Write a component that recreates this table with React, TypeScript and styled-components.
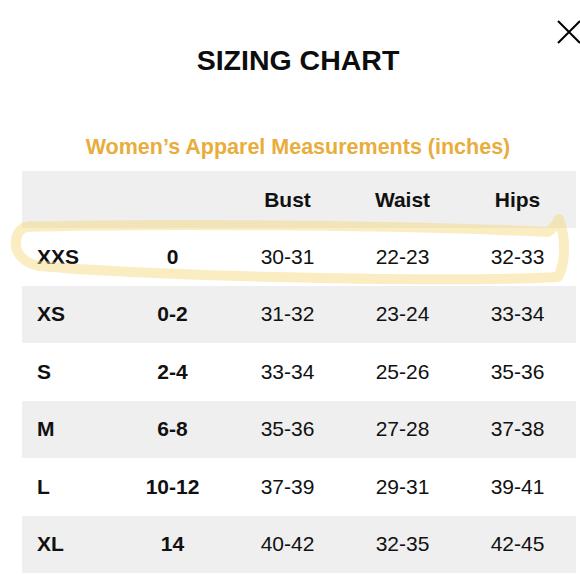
import React from "react";
import styled, { createGlobalStyle } from "styled-components";

const GlobalStyle = createGlobalStyle`
  html, body {
    margin: 0;
    padding: 0;
    background: #ffffff;
  }
  body {
    font-family: "Liberation Sans", Arial, sans-serif;
    color: #111111;
  }
`;

const Page = styled.div`
  position: relative;
  width: 580px;
  height: 580px;
  overflow: hidden;
  background: #ffffff;
`;

const CloseButton = styled.button`
  position: absolute;
  top: 20px;
  left: 557px;
  width: 24px;
  height: 24px;
  padding: 0;
  border: none;
  background: transparent;
  cursor: pointer;
`;

const Heading = styled.div`
  padding-left: 16px;
`;

const Title = styled.h1`
  margin: 43px 0 0;
  height: 34px;
  font-size: 28.5px;
  line-height: 34px;
  font-weight: 700;
  text-align: center;
  color: #0d0d0d;
`;

const Subtitle = styled.h2`
  margin: 57px 0 0;
  height: 26px;
  font-size: 21.5px;
  line-height: 26px;
  font-weight: 700;
  text-align: center;
  color: #e8ad3c;
`;

const Table = styled.div`
  margin: 11px 0 0 22px;
  width: 554px;
`;

const Row = styled.div<{ $shaded?: boolean; $height: number }>`
  display: grid;
  grid-template-columns: 93px repeat(4, 115px);
  align-items: center;
  height: ${(p) => p.$height}px;
  background: ${(p) => (p.$shaded ? "#efefef" : "#ffffff")};
`;

const Cell = styled.div<{ $bold?: boolean; $left?: boolean }>`
  font-size: 21px;
  line-height: 24px;
  font-weight: ${(p) => (p.$bold ? 700 : 400)};
  text-align: ${(p) => (p.$left ? "left" : "center")};
  padding-left: ${(p) => (p.$left ? "15px" : "0")};
  color: #111111;
`;

const Highlight = styled.svg`
  position: absolute;
  top: 0;
  left: 0;
  pointer-events: none;
`;

const rows = [
  ["XXS", "0", "30-31", "22-23", "32-33"],
  ["XS", "0-2", "31-32", "23-24", "33-34"],
  ["S", "2-4", "33-34", "25-26", "35-36"],
  ["M", "6-8", "35-36", "27-28", "37-38"],
  ["L", "10-12", "37-39", "29-31", "39-41"],
  ["XL", "14", "40-42", "32-35", "42-45"],
];

export default function App() {
  return (
    <Page>
      <GlobalStyle />
      <CloseButton aria-label="Close">
        <svg width="24" height="24" viewBox="0 0 24 24">
          <path d="M1 1 L23 23 M23 1 L1 23" stroke="#000" strokeWidth="2" />
        </svg>
      </CloseButton>
      <Heading>
        <Title>SIZING CHART</Title>
        <Subtitle>Women’s Apparel Measurements (inches)</Subtitle>
      </Heading>
      <Table>
        <Row $shaded $height={57}>
          <Cell $left />
          <Cell />
          <Cell $bold>Bust</Cell>
          <Cell $bold>Waist</Cell>
          <Cell $bold>Hips</Cell>
        </Row>
        {rows.map((r, i) => (
          <Row key={r[0]} $shaded={i % 2 === 1} $height={57.5}>
            <Cell $bold $left>
              {r[0]}
            </Cell>
            <Cell $bold>{r[1]}</Cell>
            <Cell>{r[2]}</Cell>
            <Cell>{r[3]}</Cell>
            <Cell>{r[4]}</Cell>
          </Row>
        ))}
      </Table>
      <Highlight width="580" height="580" viewBox="0 0 580 580">
        <path
          d="M24 227 C150 223, 400 225, 548 232 C554 228, 557 223, 559 219 C566 238, 566 262, 558 277 C450 283, 150 276, 40 266 C24 264, 14 252, 16 240 C17 231, 22 227, 32 226"
          fill="none"
          stroke="rgba(246, 216, 120, 0.45)"
          strokeWidth="10"
          strokeLinecap="round"
          strokeLinejoin="round"
        />
      </Highlight>
    </Page>
  );
}
